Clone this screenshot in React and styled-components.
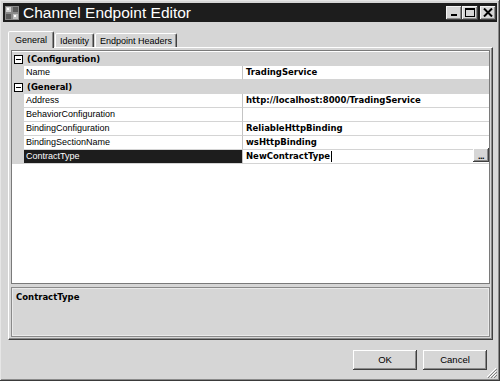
import React from 'react';
import styled, { createGlobalStyle } from 'styled-components';

const GlobalStyle = createGlobalStyle`
  * { box-sizing: border-box; }
  html, body { margin: 0; padding: 0; background: #d6d6d6; }
  body { font-family: "Liberation Sans", Arial, sans-serif; }
`;

const Window = styled.div`
  position: relative;
  width: 500px;
  height: 381px;
  padding: 3px;
  background: #d6d6d6;
  box-shadow: inset -1px -1px #3a3a3a, inset 1px 1px #e6e6e6, inset -2px -2px #8a8a8a;
  display: flex;
  flex-direction: column;
  overflow: hidden;
`;

const TitleBar = styled.div`
  height: 19px;
  background: #1d1d1d;
  display: flex;
  align-items: center;
  padding: 0 1px 0 1px;
`;

const Title = styled.div`
  flex: 1;
  margin-left: 3px;
  color: #fff;
  font-size: 15.5px;
  line-height: 19px;
  white-space: nowrap;
`;

const CaptionButton = styled.div`
  width: 16px;
  height: 14px;
  margin-left: ${p => (p.gap ? '2px' : '0')};
  background: #d6d6d6;
  box-shadow: inset -1px -1px #404040, inset 1px 1px #f4f4f4, inset -2px -2px #8a8a8a;
  display: flex;
  align-items: center;
  justify-content: center;
`;

const Body = styled.div`
  flex: 1;
  display: flex;
  flex-direction: column;
  padding: 0 4px 0 5px;
`;

const TabStrip = styled.div`
  margin-top: 9px;
  height: 16px;
  display: flex;
  align-items: flex-end;
  gap: 1px;
`;

const Tab = styled.div`
  position: relative;
  z-index: ${p => (p.active ? 2 : 1)};
  height: ${p => (p.active ? '17px' : '14px')};
  margin-bottom: ${p => (p.active ? '-1px' : '0')};
  padding: ${p => (p.active ? '2px 6px 0' : '1px 4px 0')};
  background: #d6d6d6;
  border: 1px solid;
  border-bottom: none;
  border-color: #fff #404040 transparent #fff;
  border-radius: 2px 2px 0 0;
  box-shadow: inset -1px 0 #8a8a8a;
  font-size: 9px;
  line-height: 12px;
  color: #000;
  white-space: nowrap;
`;

const Panel = styled.div`
  height: 293px;
  border: 1px solid;
  border-color: #fff #404040 #404040 #fff;
  box-shadow: inset -1px -1px #8a8a8a;
  padding: 2px;
  display: flex;
  flex-direction: column;
  gap: 3px;
`;

const Grid = styled.div`
  height: 234px;
  border: 1px solid #7a7a7a;
  background: #fff;
  padding-top: 1px;
  display: flex;
  flex-direction: column;
`;

const Row = styled.div`
  height: 14px;
  display: grid;
  grid-template-columns: 12px 219px 1fr;
  background: ${p => (p.category ? '#d4d4d4' : '#fff')};
`;

const Margin = styled.div`
  background: #d4d4d4;
  display: flex;
  align-items: center;
  justify-content: center;
`;

const ExpandBox = styled.div`
  width: 9px;
  height: 9px;
  border: 1px solid #000;
  background: #fff;
  display: flex;
  align-items: center;
  justify-content: center;
  &::after {
    content: '';
    width: 5px;
    height: 1px;
    background: #000;
  }
`;

const CategoryLabel = styled.div`
  grid-column: 2 / 4;
  padding-left: 3px;
  font-family: "DejaVu Sans", Verdana, sans-serif;
  font-weight: bold;
  font-size: 8.5px;
  line-height: 14px;
  color: #000;
  white-space: nowrap;
`;

const NameCell = styled.div`
  padding-left: 2px;
  border-bottom: 1px solid #d4d4d4;
  border-right: 1px solid #c4c4c4;
  background: ${p => (p.selected ? '#1d1d1d' : '#fff')};
  color: ${p => (p.selected ? '#fff' : '#000')};
  font-size: 9px;
  line-height: 13px;
  white-space: nowrap;
`;

const ValueCell = styled.div`
  position: relative;
  padding-left: 3px;
  border-bottom: 1px solid #d4d4d4;
  display: flex;
  align-items: center;
  font-family: "DejaVu Sans", Verdana, sans-serif;
  font-weight: bold;
  font-size: 8.5px;
  line-height: 13px;
  color: #000;
  white-space: nowrap;
`;

const Caret = styled.span`
  display: inline-block;
  width: 1px;
  height: 11px;
  margin-left: 1px;
  background: #000;
`;

const EllipsisButton = styled.div`
  position: absolute;
  right: 0;
  top: -2px;
  width: 16px;
  height: 14px;
  background: #d6d6d6;
  box-shadow: inset -1px -1px #404040, inset 1px 1px #fff, inset -2px -2px #8a8a8a;
  font-family: "Liberation Sans", Arial, sans-serif;
  font-size: 9px;
  font-weight: bold;
  line-height: 16px;
  text-align: center;
  letter-spacing: -0.5px;
`;

const Description = styled.div`
  height: 50px;
  border: 1px solid #8a8a8a;
  box-shadow: inset 1px 1px #eaeaea, inset -1px -1px #eaeaea;
  padding: 3px 4px;
  font-family: "DejaVu Sans", Verdana, sans-serif;
  font-weight: bold;
  font-size: 8.5px;
  line-height: 12px;
`;

const ButtonRow = styled.div`
  margin-top: 10px;
  display: flex;
  justify-content: flex-end;
  gap: 6px;
  padding-right: 6px;
`;

const Button = styled.div`
  width: 64px;
  height: 20px;
  background: #d6d6d6;
  box-shadow: inset -1px -1px #404040, inset 1px 1px #fff, inset -2px -2px #8a8a8a;
  font-size: 9.5px;
  line-height: 20px;
  text-align: center;
  color: #000;
`;

const Grip = styled.svg`
  position: absolute;
  right: 3px;
  bottom: 3px;
`;

const rows = [
  { category: true, label: '(Configuration)' },
  { name: 'Name', value: 'TradingService' },
  { category: true, label: '(General)' },
  { name: 'Address', value: 'http://localhost:8000/TradingService' },
  { name: 'BehaviorConfiguration', value: '' },
  { name: 'BindingConfiguration', value: 'ReliableHttpBinding' },
  { name: 'BindingSectionName', value: 'wsHttpBinding' },
  { name: 'ContractType', value: 'NewContractType', selected: true },
];

const AppIcon = () => (
  <svg width="16" height="16" viewBox="0 0 16 16">
    <rect x="1" y="1" width="14" height="14" fill="#8a8a8a" />
    <rect x="2" y="2" width="5" height="5" fill="#d0d0d0" />
    <rect x="9" y="2" width="5" height="5" fill="#5a5a5a" />
    <rect x="2" y="9" width="5" height="5" fill="#5a5a5a" />
    <rect x="9" y="9" width="5" height="5" fill="#c0c0c0" />
    <rect x="3" y="3" width="2" height="2" fill="#fff" />
    <rect x="10" y="10" width="2" height="2" fill="#fff" />
  </svg>
);

export default function App() {
  return (
    <>
      <GlobalStyle />
      <Window>
        <TitleBar>
          <AppIcon />
          <Title>Channel Endpoint Editor</Title>
          <CaptionButton>
            <svg width="10" height="9" viewBox="0 0 10 9">
              <rect x="2" y="6" width="6" height="2" fill="#000" />
            </svg>
          </CaptionButton>
          <CaptionButton>
            <svg width="10" height="9" viewBox="0 0 10 9">
              <rect x="0.5" y="0.5" width="9" height="8" fill="none" stroke="#000" />
              <rect x="0" y="0" width="10" height="2" fill="#000" />
            </svg>
          </CaptionButton>
          <CaptionButton gap>
            <svg width="10" height="9" viewBox="0 0 10 9">
              <path d="M1 0.5 L9 8.5 M9 0.5 L1 8.5" stroke="#000" strokeWidth="2" />
            </svg>
          </CaptionButton>
        </TitleBar>

        <Body>
          <TabStrip>
            <Tab active>General</Tab>
            <Tab>Identity</Tab>
            <Tab>Endpoint Headers</Tab>
          </TabStrip>

          <Panel>
            <Grid>
              {rows.map((r, i) =>
                r.category ? (
                  <Row key={i} category>
                    <Margin>
                      <ExpandBox />
                    </Margin>
                    <CategoryLabel>{r.label}</CategoryLabel>
                  </Row>
                ) : (
                  <Row key={i}>
                    <Margin />
                    <NameCell selected={r.selected}>{r.name}</NameCell>
                    <ValueCell>
                      {r.value}
                      {r.selected && <Caret />}
                      {r.selected && <EllipsisButton>...</EllipsisButton>}
                    </ValueCell>
                  </Row>
                )
              )}
            </Grid>
            <Description>ContractType</Description>
          </Panel>

          <ButtonRow>
            <Button>OK</Button>
            <Button>Cancel</Button>
          </ButtonRow>
        </Body>

        <Grip width="11" height="11" viewBox="0 0 11 11">
          <path d="M10 1 L1 10 M10 4 L4 10 M10 7 L7 10" stroke="#fff" strokeWidth="1" />
          <path d="M11 2 L2 11 M11 5 L5 11 M11 8 L8 11" stroke="#808080" strokeWidth="1" />
        </Grip>
      </Window>
    </>
  );
}
